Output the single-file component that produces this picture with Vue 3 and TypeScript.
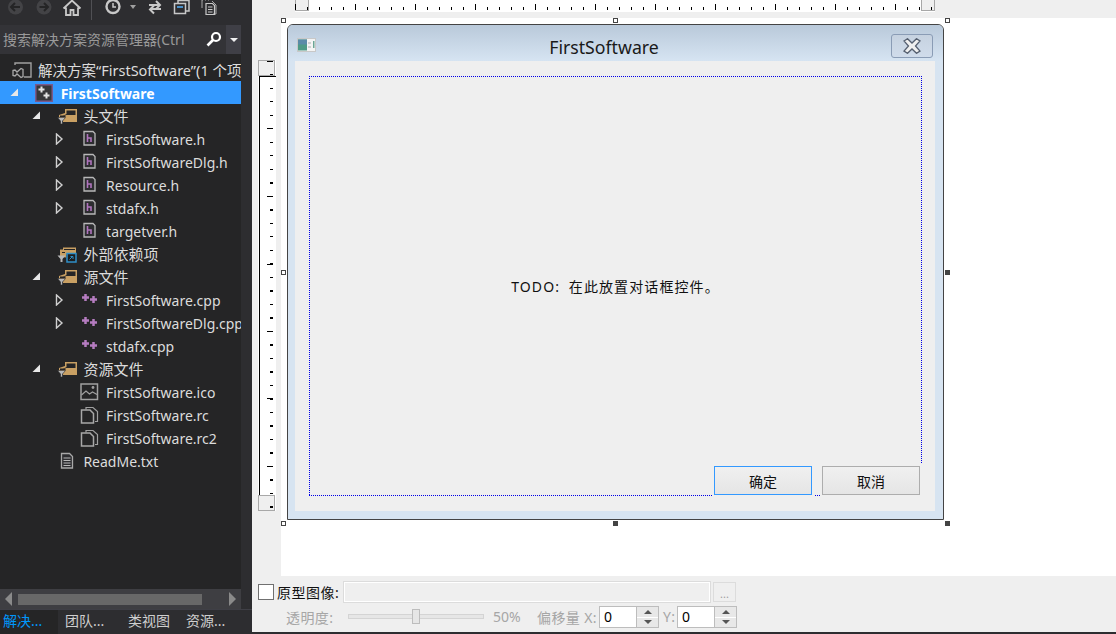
<script setup lang="ts">
type IconName = 'solution' | 'project' | 'filter' | 'deps' | 'header' | 'cpp' | 'image' | 'rc' | 'text'

interface TreeRow {
  label: string
  level: number
  icon: IconName
  arrow?: 'open' | 'closed'
  selected?: boolean
}

const rows: TreeRow[] = [
  { label: '解决方案“FirstSoftware”(1 个项目)', level: 0, icon: 'solution' },
  { label: 'FirstSoftware', level: 1, icon: 'project', arrow: 'open', selected: true },
  { label: '头文件', level: 2, icon: 'filter', arrow: 'open' },
  { label: 'FirstSoftware.h', level: 3, icon: 'header', arrow: 'closed' },
  { label: 'FirstSoftwareDlg.h', level: 3, icon: 'header', arrow: 'closed' },
  { label: 'Resource.h', level: 3, icon: 'header', arrow: 'closed' },
  { label: 'stdafx.h', level: 3, icon: 'header', arrow: 'closed' },
  { label: 'targetver.h', level: 3, icon: 'header' },
  { label: '外部依赖项', level: 2, icon: 'deps' },
  { label: '源文件', level: 2, icon: 'filter', arrow: 'open' },
  { label: 'FirstSoftware.cpp', level: 3, icon: 'cpp', arrow: 'closed' },
  { label: 'FirstSoftwareDlg.cpp', level: 3, icon: 'cpp', arrow: 'closed' },
  { label: 'stdafx.cpp', level: 3, icon: 'cpp' },
  { label: '资源文件', level: 2, icon: 'filter', arrow: 'open' },
  { label: 'FirstSoftware.ico', level: 3, icon: 'image' },
  { label: 'FirstSoftware.rc', level: 3, icon: 'rc' },
  { label: 'FirstSoftware.rc2', level: 3, icon: 'rc' },
  { label: 'ReadMe.txt', level: 2, icon: 'text' },
]

const tabs = ['解决...', '团队...', '类视图', '资源...']
const handles = ['tl', 'tc', 'tr', 'ml', 'mr', 'bl', 'bc', 'br']

// 每级缩进
const indent = (level: number) => ({ paddingLeft: `${level * 22.7}px` })
// 纯中文标签比英文略大
const labelClass = (row: TreeRow) => ({
  'label--cjk': /^[\u4e00-\u9fa5]+$/.test(row.label),
  'label--solution': row.level === 0,
})
</script>

<template>
  <div class="ide">
    <aside class="side">
      <div class="toolbar">
        <svg class="tool" width="26" height="20" viewBox="0 0 26 20"><circle cx="15.500" cy="7" r="7.500" fill="#434346" /><path d="M20 7h-8.500M15 3 11 7l4 4" fill="none" stroke="#252526" stroke-width="2" /></svg>
        <svg class="tool t-fwd" width="28" height="20" viewBox="0 0 28 20"><circle cx="16" cy="7" r="7.500" fill="#434346" /><path d="M11.500 7H20M16 3l4 4-4 4" fill="none" stroke="#252526" stroke-width="2" /></svg>
        <svg class="tool t-home" width="20" height="20" viewBox="0 0 20 20"><path d="M1.500 8.500 10 .5l8.500 8M4 7.500V15h4.500v-5h3v5H16V7.500" fill="none" stroke="#c8c8c8" stroke-width="1.800" /></svg>
        <span class="tool-sep"></span>
        <svg class="tool t-clock" width="18" height="20" viewBox="0 0 18 20"><circle cx="9" cy="6.500" r="6.500" fill="none" stroke="#c8c8c8" stroke-width="2.400" /><path d="M9 3v4h3" fill="none" stroke="#c8c8c8" stroke-width="1.500" /></svg>
        <span class="tool-caret"></span>
        <svg class="tool t-sync" width="18" height="20" viewBox="0 0 18 20"><path d="M3 5h10M10 1l4 4-4 4M15 9H5M8 5.500 4 9.500l4 4" fill="none" stroke="#c8c8c8" stroke-width="2" /></svg>
        <svg class="tool t-copy" width="18" height="20" viewBox="0 0 18 20"><path d="M5 3V0.500h11V11h-3" fill="none" stroke="#c8c8c8" stroke-width="1.500" /><rect x="1.500" y="3.500" width="11" height="10" fill="none" stroke="#c8c8c8" stroke-width="1.500" /><path d="M4 7h6" stroke="#4a90c8" stroke-width="2" /></svg>
        <svg class="tool t-pages" width="18" height="20" viewBox="0 0 18 20"><path d="M1 0h1M4 0h1M7 0h1M1 0v8M11 1l4 4v9h-3" fill="none" stroke="#a8a8a8" /><path d="M5 3.500h6.500l2 2v9H5zM7 7h4.500M7 9.500h4.500M7 12h4.500" fill="none" stroke="#c8c8c8" stroke-width="1.200" /></svg>
      </div>

      <div class="search">
        <span class="search-text">搜索解决方案资源管理器(Ctrl</span>
        <svg class="search-icon" width="16" height="16" viewBox="0 0 16 16"><circle cx="10" cy="6" r="4" fill="none" stroke="#fff" stroke-width="2.200" /><path d="M7 9 1.500 14.500" stroke="#fff" stroke-width="2.600" /></svg>
        <span class="search-drop"><i></i></span>
      </div>

      <ul class="tree">
        <li
          v-for="row in rows"
          :key="row.label"
          class="row"
          :class="{ 'row--selected': row.selected }"
          :style="indent(row.level)"
        >
          <span class="arrow">
            <svg v-if="row.arrow === 'open'" width="9" height="9" viewBox="0 0 9 9"><path d="M8 .5V8H.5z" fill="#e8e8e8" /></svg>
            <svg v-else-if="row.arrow === 'closed'" width="9" height="12" viewBox="0 0 9 12"><path d="M1.500 1v10L7 6z" fill="none" stroke="#d0d0d0" stroke-width="1.400" /></svg>
          </span>
          <span class="icon">
            <svg width="20" height="18" viewBox="0 0 20 18">
              <template v-if="row.icon === 'solution'">
                <path d="M3 4V2h16v14h-7" fill="none" stroke="#a0a0a0" stroke-width="1.400" />
                <path d="M1 9.500 3 9l2 2 4-3.500 2 1v7l-2 1-4-3.500-2 2-2-.5z" fill="none" stroke="#a8a8a8" stroke-width="1.300" />
              </template>
              <template v-else-if="row.icon === 'project'">
                <rect x=".75" y=".75" width="16.500" height="16.500" fill="#38383a" stroke="#7a5a8c" stroke-width="1.500" />
                <path d="M3.500 5.500h6M6.500 2.500v6M8.500 11.500h6M11.500 8.500v6" stroke="#e4e4e4" stroke-width="2" />
              </template>
              <template v-else-if="row.icon === 'filter'">
                <path d="M8 2h12v13H6v-3H2V8l6-2z" fill="#c9a063" />
                <path d="M9.500 3.500h9V8H9.500L5 9.500 9.500 7z" fill="#252526" />
                <path d="M3 8.500h5.500V10H3z" fill="#252526" />
                <path d="M.5 10.500h8L5.500 14v3h-2v-3z" fill="#b8b8b8" stroke="#252526" stroke-width=".6" />
              </template>
              <template v-else-if="row.icon === 'deps'">
                <path d="M3 12V4.500h3v-2h13v7H9v3z" fill="#c9a063" />
                <path d="M7 4.500h11M5 7.500h3" stroke="#252526" />
                <path d="M.5 10.500h8L5.500 14v3h-2v-3z" fill="#b8b8b8" />
                <rect x="10" y="8.500" width="9" height="8.500" fill="#1e1e1e" stroke="#2f8fc8" stroke-width="1.500" />
                <path d="M12.500 14.500 15.500 11.500M13.500 11.500h2.500V14" fill="none" stroke="#2f8fc8" />
              </template>
              <template v-else-if="row.icon === 'header'">
                <path d="M4 1.500h9l2 2v11.500H4z" fill="#2d2d30" stroke="#b8b8b8" stroke-width="1.300" />
                <path d="M7.500 4v8M7.500 8h3.500v4" fill="none" stroke="#b075bd" stroke-width="1.600" />
              </template>
              <template v-else-if="row.icon === 'cpp'">
                <path d="M2 6.500h7M5.500 3v7M10 8.500h7M13.500 5v7" stroke="#b57cc0" stroke-width="2.500" />
              </template>
              <template v-else-if="row.icon === 'image'">
                <rect x="1" y="1" width="16.500" height="15.500" fill="none" stroke="#a0a0a0" stroke-width="1.500" />
                <path d="M1.500 12 6 8l3.500 3 3-2 4.500 2.500" fill="none" stroke="#a0a0a0" stroke-width="1.200" />
                <circle cx="13" cy="4.500" r="1.400" fill="#a0a0a0" />
              </template>
              <template v-else-if="row.icon === 'rc'">
                <path d="M6 3.500V1.500h7l4.500 4v10H15" fill="none" stroke="#a0a0a0" stroke-width="1.200" />
                <path d="M1.500 4h8.500l3.500 3.500V17h-12z" fill="#252526" stroke="#a8a8a8" stroke-width="1.500" />
              </template>
              <template v-else>
                <path d="M4.500 1.500h8l3 3V16h-11z" fill="#2d2d30" stroke="#a8a8a8" stroke-width="1.300" />
                <path d="M6.500 6h7M6.500 8.500h7M6.500 11h7M6.500 13.500h7" stroke="#b8b8b8" />
              </template>
            </svg>
          </span>
          <span class="label" :class="labelClass(row)">{{ row.label }}</span>
        </li>
      </ul>

      <div class="hscroll">
        <svg width="8" height="14" viewBox="0 0 8 14"><path d="M7 0v14L0 7z" fill="#8a8a8a" /></svg>
        <span class="hthumb"></span>
        <svg width="8" height="14" viewBox="0 0 8 14"><path d="M1 0v14l7-7z" fill="#8a8a8a" /></svg>
      </div>

      <div class="tabs">
        <span v-for="(tab, i) in tabs" :key="tab" class="tab" :class="[`tab-${i}`, { 'tab--active': i === 0 }]">{{ tab }}</span>
      </div>
    </aside>

    <main class="main">
      <div class="top-strip">
        <div class="hruler">
          <span class="hruler-end"></span>
          <span class="hruler-end hruler-end--right"></span>
        </div>
      </div>

      <div class="work">
        <div class="gutter">
          <div class="vruler">
            <span class="vruler-end"></span>
            <span class="vruler-mid"></span>
            <span class="vruler-end"></span>
          </div>
        </div>

        <div class="canvas">
          <div class="design">
            <span v-for="h in handles" :key="h" class="handle" :class="`handle-${h}`"></span>
            <div class="dialog">
              <div class="titlebar">
                <svg class="app-icon" width="20" height="15" viewBox="0 0 20 15">
                  <rect x=".5" y=".5" width="18" height="13" fill="#f4f4f4" stroke="#c8c8c8" />
                  <rect x="1" y="1.500" width="9" height="11" fill="#4f9a86" />
                  <rect x="1" y="1.500" width="9" height="5" fill="#5b8ba8" />
                  <rect x="11" y="4" width="3" height="2" fill="#d0d0d0" />
                  <rect x="11" y="8" width="3" height="2" fill="#d0d0d0" />
                  <rect x="16" y="3" width="1.500" height="7" fill="#6aa595" />
                </svg>
                <span class="title">FirstSoftware</span>
                <button class="close">
                  <svg width="18" height="16" viewBox="0 0 18 16"><path d="M1 3l3.500-2.300L9 5l4.500-4.300L17 3l-4.500 5 4.500 5-3.500 2.300L9 11l-4.500 4.300L1 13l4.500-5z" fill="#efefef" stroke="#566070" stroke-width="1.300" /></svg>
                </button>
              </div>
              <div class="client">
                <div class="dots">
                  <p class="todo">TODO: 在此放置对话框控件。</p>
                  <div class="buttons">
                    <button class="btn btn--default">确定</button>
                    <button class="btn">取消</button>
                  </div>
                </div>
              </div>
            </div>
          </div>
        </div>
      </div>

      <div class="bottom">
        <div class="line line-1">
          <span class="check"></span>
          <span class="proto">原型图像:</span>
          <span class="proto-input"></span>
          <span class="browse">...</span>
        </div>
        <div class="line line-2">
          <span class="muted opacity-label">透明度:</span>
          <span class="slider"><i></i></span>
          <span class="muted percent">50%</span>
          <span class="muted offset-label">偏移量 X:</span>
          <span class="spin">
            <b>0</b>
            <span class="spin-btns"><i class="up"></i><i class="down"></i></span>
          </span>
          <span class="muted y-label">Y:</span>
          <span class="spin">
            <b>0</b>
            <span class="spin-btns"><i class="up"></i><i class="down"></i></span>
          </span>
        </div>
      </div>
    </main>
  </div>
</template>

<style scoped>
.ide {
  display: flex;
  width: 1116px;
  height: 634px;
  overflow: hidden;
  font-family: "Noto Sans", "Noto Sans CJK SC", sans-serif;
  font-size: 14px;
}

/* 左侧解决方案资源管理器 */
.side {
  display: flex;
  flex-direction: column;
  flex: none;
  width: 252px;
  background: #2d2d30;
}

.toolbar {
  flex: none;
  height: 25px;
  display: flex;
  align-items: flex-start;
  width: 242px;
}

.tool { flex: none; }
.t-fwd { margin-left: 2px; }
.t-home { margin-left: 6px; }
.tool-sep { width: 1px; height: 20px; margin-left: 9px; background: #505054; }
.t-clock { margin-left: 12px; }
.tool-caret {
  width: 0;
  height: 0;
  margin: 5px 0 0 8px;
  border: 3px solid transparent;
  border-top: 4px solid #a0a0a0;
}
.t-sync { margin-left: 10px; }
.t-copy { margin-left: 9px; }
.t-pages { margin-left: 10px; }

.search {
  flex: none;
  display: flex;
  align-items: center;
  width: 241px;
  height: 29px;
  background: #333337;
  color: #999;
  overflow: hidden;
}

.search-text {
  flex: none;
  width: 200px;
  padding-left: 3px;
  overflow: hidden;
  white-space: nowrap;
  box-sizing: border-box;
  line-height: 29px;
}

.search-icon { flex: none; margin: -2px 0 0 6px; }

.search-drop {
  flex: none;
  display: flex;
  align-items: center;
  justify-content: center;
  width: 15px;
  height: 29px;
  margin-left: 4px;
  background: #3f3f46;
}

.search-drop i {
  width: 0;
  height: 0;
  margin-top: 4px;
  border: 4px solid transparent;
  border-top: 4px solid #f0f0f0;
}

.tree {
  flex: 1;
  width: 241px;
  margin: 0;
  padding: 4px 0 0;
  list-style: none;
  background: #252526;
  overflow: hidden;
}

.row {
  display: flex;
  align-items: center;
  height: 23px;
  color: #dcdcdc;
  white-space: nowrap;
}

.row--selected {
  background: #3399ff;
  color: #fff;
  font-weight: 700;
}

.arrow {
  flex: none;
  width: 28px;
  margin-left: -13px;
  display: flex;
  align-items: center;
}

.icon {
  flex: none;
  width: 23px;
  height: 18px;
}

.icon svg {
  display: block;
  margin-left: -3px;
}

.label {
  line-height: 23px;
  padding-top: 1px;
}

.label--cjk { font-size: 15px; }
.label--solution { font-size: 14.5px; }

.hscroll {
  flex: none;
  display: flex;
  align-items: center;
  width: 241px;
  height: 20px;
  background: #3e3e42;
  padding-left: 5px;
  box-sizing: border-box;
}

.hthumb {
  width: 184px;
  height: 11px;
  margin: 0 26px 0 5px;
  background: #686868;
}

.tabs {
  flex: none;
  display: flex;
  height: 25px;
  border-top: 1px solid #3f3f46;
  box-sizing: border-box;
  color: #cfcfcf;
}

.tab {
  flex: none;
  line-height: 22px;
  white-space: nowrap;
}

.tab-0 { width: 58px; padding-left: 3px; box-sizing: border-box; }
.tab-1 { width: 63px; padding-left: 7px; box-sizing: border-box; }
.tab-2 { width: 58px; padding-left: 7px; box-sizing: border-box; }
.tab-3 { padding-left: 7px; }

.tab--active {
  background: #252526;
  color: #0097fb;
}

/* 右侧设计区 */
.main {
  flex: 1;
  display: flex;
  flex-direction: column;
  background: #efefef;
}

.top-strip {
  flex: none;
  height: 18px;
  padding-left: 43px;
}

.hruler {
  position: relative;
  display: flex;
  justify-content: space-between;
  width: 640px;
  height: 12px;
  background: #fff;
}

/* 刻度盖在标尺两端的滑块之上 */
.hruler::after {
  content: "";
  position: absolute;
  inset: 0;
  background:
    repeating-linear-gradient(90deg, #000 0 1px, transparent 1px 12px) 0 7px / 100% 3px no-repeat,
    repeating-linear-gradient(90deg, #000 0 1px, transparent 1px 60px) 0 4px / 100% 6px no-repeat;
}

.hruler-end {
  flex: none;
  width: 14px;
  height: 11px;
  box-sizing: border-box;
  background: #efefef;
  border: 1px solid #a8a8a8;
  border-top: 0;
}

.work {
  flex: 1;
  display: flex;
  min-height: 0;
}

.gutter {
  flex: none;
  width: 29px;
  padding: 42px 0 0 6px;
  box-sizing: border-box;
}

.vruler {
  position: relative;
  display: flex;
  flex-direction: column;
  width: 18px;
  height: 451px;
  background: #fff;
}

.vruler::after {
  content: "";
  position: absolute;
  inset: 0;
  background:
    repeating-linear-gradient(180deg, #000 0 1px, transparent 1px 13.5px) 12px 1px / 3px 100% no-repeat,
    repeating-linear-gradient(180deg, #000 0 1px, transparent 1px 67.5px) 9px 1px / 6px 100% no-repeat;
}

.vruler-end {
  flex: none;
  width: 17px;
  height: 16px;
  box-sizing: border-box;
  background: #efefef;
  border: 1px solid #a8a8a8;
}

.vruler-mid {
  flex: 1;
  border-left: 1px solid #000;
  border-top: 1px solid #000;
  margin-left: 1px;
}

.canvas {
  flex: 1;
  background: #fff;
  padding: 6px 0 0 6px;
}

.design {
  position: relative;
  width: 657px;
  height: 496px;
}

.handle {
  position: absolute;
  width: 5px;
  height: 5px;
  box-sizing: border-box;
  background: #fff;
  border: 1px solid #444;
}

.handle-tl { left: -6px; top: -6px; }
.handle-tc { left: 326px; top: -6px; }
.handle-tr { left: 658px; top: -6px; }
.handle-ml { left: -6px; top: 246px; }
.handle-mr { left: 658px; top: 246px; background: #444; }
.handle-bl { left: -6px; top: 497px; }
.handle-bc { left: 326px; top: 497px; background: #444; }
.handle-br { left: 658px; top: 497px; background: #444; }

.dialog {
  display: flex;
  flex-direction: column;
  height: 100%;
  box-sizing: border-box;
  border: 1px solid #444;
  border-radius: 6px 6px 0 0;
  background: #d7e4f1;
  overflow: hidden;
}

.titlebar {
  flex: none;
  display: flex;
  align-items: center;
  height: 36px;
  box-sizing: border-box;
  padding: 6px 10px 0 9px;
  background: linear-gradient(#b9c9da, #d6e4f2);
}

.app-icon { flex: none; margin-top: -2px; }

.title {
  flex: 1;
  margin-top: 1px;
  text-align: center;
  font-size: 17.7px;
  color: #1a1a1a;
}

.close {
  flex: none;
  display: flex;
  align-items: center;
  justify-content: center;
  width: 42px;
  height: 24px;
  padding: 0;
  border: 1px solid #8a9cb5;
  border-radius: 3px;
  background: linear-gradient(#c6d2e0, #d0dceb);
}

.client {
  flex: 1;
  margin: 0 8px 8px 7px;
  padding: 15px 13px 15px 14px;
  background: #efefef;
}

/* 蓝色点线边框，用渐变画以保证每隔一像素一个点 */
.dots {
  position: relative;
  display: flex;
  align-items: center;
  justify-content: center;
  height: 100%;
  box-sizing: border-box;
  padding: 1px;
  background:
    repeating-linear-gradient(90deg, #0000e6 0 1px, transparent 1px 2px) 0 0 / 100% 1px no-repeat,
    repeating-linear-gradient(90deg, #0000e6 0 1px, transparent 1px 2px) 0 100% / 100% 1px no-repeat,
    repeating-linear-gradient(180deg, #0000e6 0 1px, transparent 1px 2px) 0 0 / 1px 100% no-repeat,
    repeating-linear-gradient(180deg, #0000e6 0 1px, transparent 1px 2px) 100% 0 / 1px 100% no-repeat;
}

.todo {
  margin: 0;
  color: #111;
  font-size: 14px;
  letter-spacing: 1.1px;
  word-spacing: 4px;
}

.buttons {
  position: absolute;
  right: 2px;
  bottom: 1px;
  display: flex;
  gap: 10px;
}

.btn {
  width: 98px;
  height: 29px;
  box-sizing: border-box;
  border: 1px solid #adadad;
  background: linear-gradient(#f0f0f0, #e5e5e5);
  font: 14px "Noto Sans CJK SC", sans-serif;
  color: #111;
  outline: 2px solid #efefef;
}

.btn--default {
  border-color: #3399ff;
}

/* 底部属性栏 */
.bottom {
  flex: none;
  height: 58px;
  box-sizing: border-box;
  border-bottom: 2px solid #2d2d30;
  padding: 5px 0 0 6px;
  background: #efefef;
}

.line {
  display: flex;
  align-items: center;
}

.line-1 { height: 22px; }
.line-2 { height: 22px; margin-top: 3px; }

.check {
  flex: none;
  width: 16px;
  height: 16px;
  box-sizing: border-box;
  background: #fff;
  border: 1px solid #707070;
}

.proto {
  flex: none;
  width: 69px;
  padding-left: 3px;
  box-sizing: border-box;
  color: #111;
  white-space: nowrap;
  letter-spacing: .5px;
}

.proto-input {
  flex: none;
  width: 368px;
  height: 22px;
  box-sizing: border-box;
  border: 1px solid #dcdcdc;
  outline: 1px solid #fff;
  outline-offset: -2px;
}

.browse {
  flex: none;
  width: 23px;
  height: 20px;
  margin-left: 2px;
  box-sizing: border-box;
  border: 1px solid #dcdcdc;
  color: #a0a0a0;
  font-size: 11px;
  line-height: 22px;
  text-align: center;
}

.muted {
  flex: none;
  color: #a6a6a6;
  white-space: nowrap;
  letter-spacing: .4px;
  margin-top: -1px;
}

.opacity-label { width: 62px; margin-left: 28px; }

.slider {
  position: relative;
  flex: none;
  width: 136px;
  height: 5px;
  margin-top: -2px;
  box-sizing: border-box;
  background: #e6e6e6;
  border: 1px solid #d4d4d4;
}

.slider i {
  position: absolute;
  left: 63px;
  top: -6px;
  width: 8px;
  height: 15px;
  box-sizing: border-box;
  background: #e6e6e6;
  border: 1px solid #bdbdbd;
}

.percent { width: 44px; margin-left: 9px; letter-spacing: 0; }
.offset-label { width: 62px; }
.y-label { width: 14px; margin-left: 4px; }

.spin {
  flex: none;
  display: flex;
  width: 60px;
  height: 22px;
  box-sizing: border-box;
  background: #fff;
  border: 1px solid #bdbdbd;
}

.spin b {
  flex: 1;
  padding-left: 4px;
  font-weight: 400;
  color: #000;
  line-height: 20px;
}

.spin-btns {
  flex: none;
  display: flex;
  flex-direction: column;
  width: 21px;
  gap: 1px;
  border-left: 1px solid #bdbdbd;
  background: #fff;
}

.spin-btns i {
  flex: 1;
  display: flex;
  align-items: center;
  justify-content: center;
  background: #e8e8e8;
}

.spin-btns i::after {
  content: "";
  width: 0;
  height: 0;
  border: 4px solid transparent;
}

.up::after { border-bottom: 4px solid #555 !important; border-top-width: 0 !important; }
.down::after { border-top: 4px solid #555 !important; border-bottom-width: 0 !important; }
</style>
